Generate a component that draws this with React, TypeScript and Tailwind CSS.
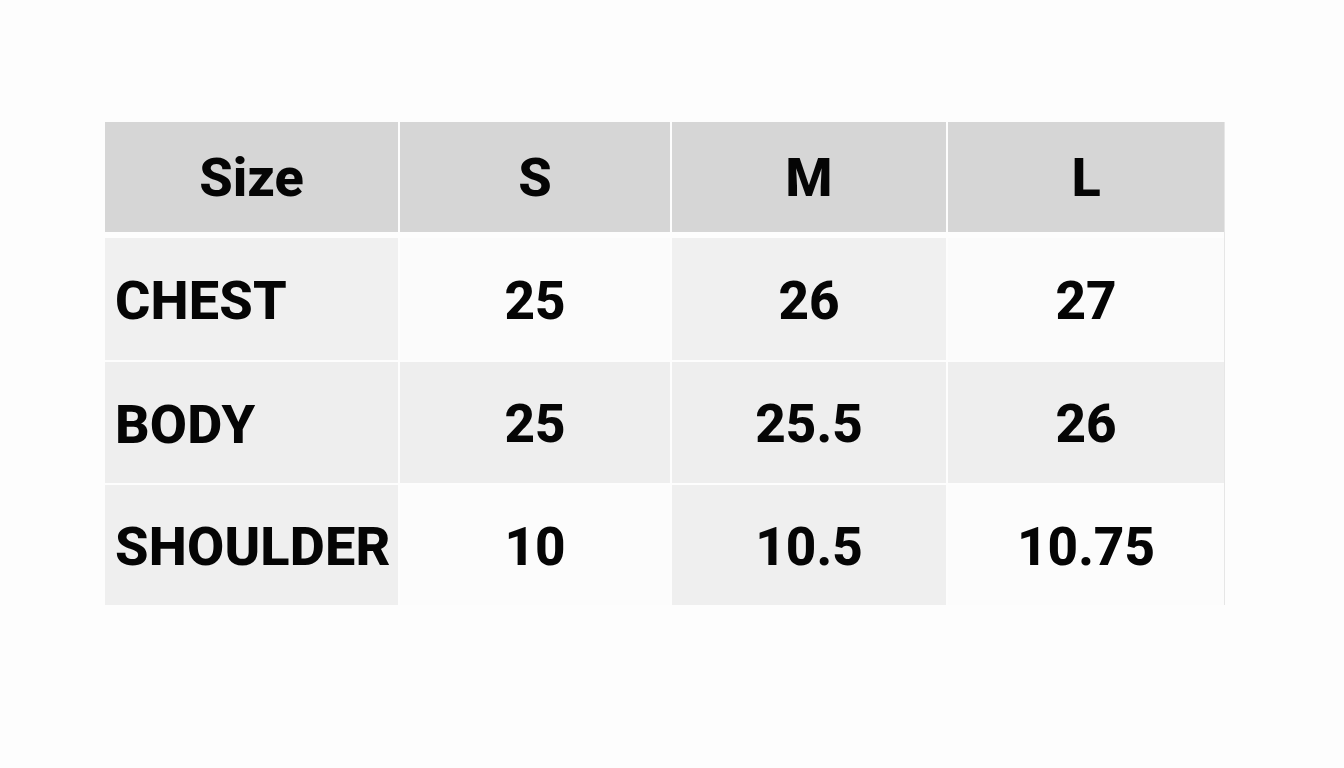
const cols = 'grid grid-cols-[293px_270px_274px_276px] gap-x-[2px]';

const rows = [
  { label: 'CHEST', values: ['25', '26', '27'], bg: ['bg-[#f0f0f0]', 'bg-[#fbfbfb]', 'bg-[#f0f0f0]', 'bg-[#fbfbfb]'], h: 'h-[122px]' },
  { label: 'BODY', values: ['25', '25.5', '26'], bg: ['bg-[#eeeeee]', 'bg-[#eeeeee]', 'bg-[#eeeeee]', 'bg-[#eeeeee]'], h: 'h-[121px]' },
  { label: 'SHOULDER', values: ['10', '10.5', '10.75'], bg: ['bg-[#efefef]', 'bg-[#fcfcfc]', 'bg-[#efefef]', 'bg-[#fcfcfc]'], h: 'h-[120px]' },
];

export default function App() {
  return (
    <div className="w-full h-[768px] bg-[#fdfdfd] pt-[122px] pl-[105px] font-['Roboto',sans-serif] font-extrabold text-[#050505]">
      <div className="w-[1120px] border-r border-[#e6e6e6]">
        <div className={`${cols} mb-[6px]`}>
          {['Size', 'S', 'M', 'L'].map((h) => (
            <div key={h} className="h-[110px] bg-[#d6d6d6] flex items-center justify-center pt-[2px] text-[54px] leading-none">
              {h}
            </div>
          ))}
        </div>
        <div className="flex flex-col gap-y-[2px]">
          {rows.map((r) => (
            <div key={r.label} className={cols}>
              <div className={`${r.h} ${r.bg[0]} flex items-center pl-[10px] pt-[4px] text-[54px] tracking-[0.2px] leading-none`}>{r.label}</div>
              {r.values.map((v, i) => (
                <div key={i} className={`${r.h} ${r.bg[i + 1]} flex items-center justify-center pt-[4px] text-[53px] leading-none`}>
                  {v}
                </div>
              ))}
            </div>
          ))}
        </div>
      </div>
    </div>
  );
}
